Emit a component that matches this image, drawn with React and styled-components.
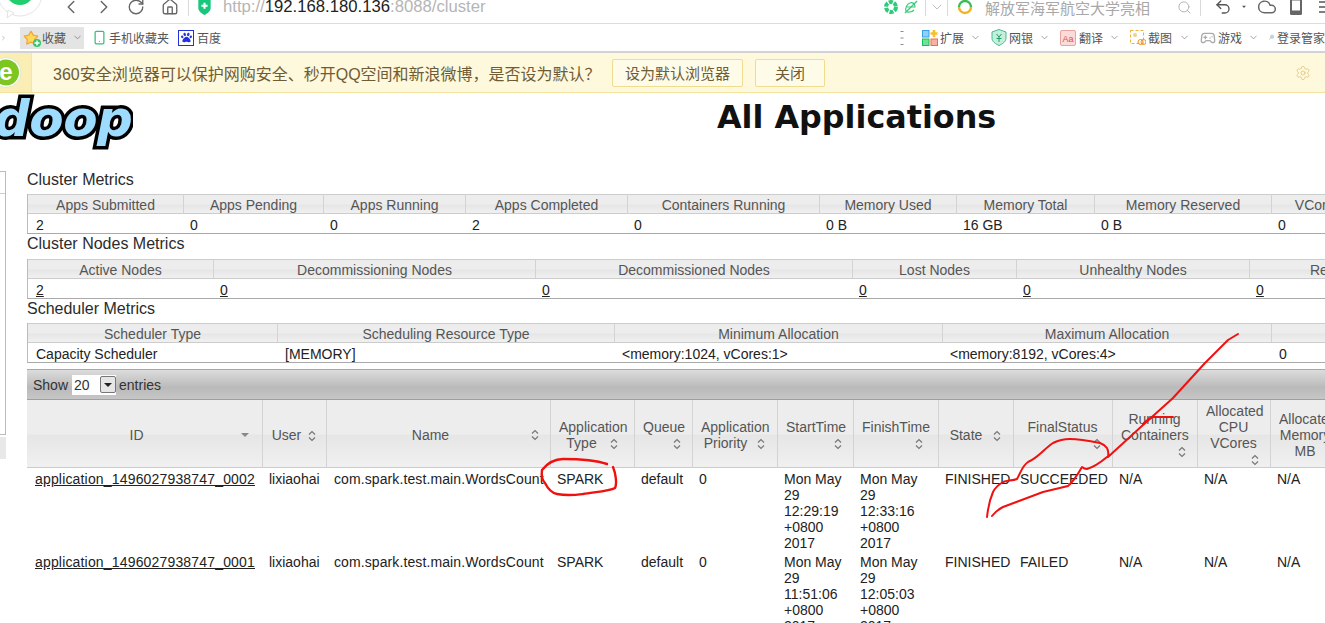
import React from 'react'
import styled, { createGlobalStyle } from 'styled-components'
import {
  ChevronLeft, ChevronRight, ChevronDown, RotateCw, House, Search, Undo2, Cloud, Settings,
  Smartphone, Star, Gamepad2,
} from 'lucide-react'
import { FaPaw } from 'react-icons/fa'

const GlobalStyle = createGlobalStyle`
  html, body {
    margin: 0;
    height: 100%;
    overflow: hidden;
    background: #fff;
  }
  body {
    font-family: "Liberation Sans", Arial, sans-serif;
    font-size: 14px;
    color: #222;
  }
  #root {
    width: 1325px;
    height: 623px;
    overflow: hidden;
    position: relative;
  }
`

const CJK = `"Liberation Sans", "Noto Sans CJK SC", sans-serif`

const Address = styled.div`
  height: 24px;
  box-sizing: border-box;
  border-bottom: 1px solid #dcdcdc;
  padding-bottom: 9px;
  display: flex;
  align-items: center;
  background: #fff;
`
const Slot = styled.div`
  width: ${p => p.$w}px;
  flex: none;
  display: flex;
  align-items: center;
  justify-content: ${p => p.$end ? 'flex-end' : 'center'};
  color: ${p => p.$c || '#666'};
`
const Sep = styled.div`
  width: 1px;
  height: 17px;
  flex: none;
  background: #d9d9d9;
`
const Url = styled.div`
  font-size: 16.7px;
  color: #b5b5b5;
  margin-left: 3px;
  white-space: nowrap;
  b {
    font-weight: normal;
    color: #222;
  }
`
const Spacer = styled.div`
  flex: 1;
`
const SearchHint = styled.div`
  width: 191px;
  flex: none;
  font-family: ${CJK};
  font-size: 15px;
  color: #a8a8a8;
  white-space: nowrap;
`
const Bookmarks = styled.div`
  height: 29px;
  box-sizing: border-box;
  border-bottom: 2px solid #d2d2d2;
  display: flex;
  align-items: center;
  background: #fff;
  font-family: ${CJK};
  font-size: 12px;
  color: #555;
`
const FavButton = styled.div`
  width: 64px;
  height: 22px;
  flex: none;
  margin: 0 8px 0 13px;
  background: #e4e4e4;
  display: flex;
  align-items: center;
  padding-left: 3px;
  box-sizing: border-box;
  gap: 3px;
`
const Mark = styled.div`
  display: flex;
  align-items: center;
  gap: ${p => p.$gap ?? 2}px;
  margin-right: ${p => p.$mr ?? 0}px;
  white-space: nowrap;
  flex: none;
`
const PawBox = styled.span`
  width: 14px;
  height: 14px;
  border: 1px solid #2233dd;
  color: #2233dd;
  display: inline-flex;
  align-items: center;
  justify-content: center;
`
const Tool = styled.div`
  display: flex;
  align-items: center;
  width: ${p => p.$w}px;
  flex: none;
  white-space: nowrap;
  overflow: hidden;
  gap: ${p => p.$gap ?? 2}px;
`
const Caret = styled(ChevronDown)`
  margin-left: auto;
  margin-right: 10px;
  color: #999;
`

const InfoBar = styled.div`
  height: 40px;
  box-sizing: border-box;
  background: #fef8dd;
  border-bottom: 1px solid #f3e29b;
  display: flex;
  align-items: center;
  font-family: ${CJK};
  font-size: 16px;
  color: #6e5c34;
`
const InfoIcon = styled.div`
  width: 31px;
  height: 100%;
  flex: none;
  background: #fbeeb5;
  border-right: 1px solid #f6e6a6;
`
const InfoText = styled.div`
  margin-left: 21px;
  width: 559px;
  flex: none;
  white-space: nowrap;
`
const InfoButton = styled.div`
  width: ${p => p.$w}px;
  height: 28px;
  box-sizing: border-box;
  flex: none;
  margin-left: ${p => p.$ml}px;
  border: 1px solid #f0dc8e;
  border-radius: 2px;
  background: #fffbe9;
  font-size: 15px;
  display: flex;
  align-items: center;
  justify-content: center;
`
const Gear = styled(Settings)`
  margin-left: auto;
  margin-right: 14px;
  color: #e0c47e;
`

const Header = styled.header`
  height: 77px;
  display: flex;
  overflow: hidden;
`
const Logo = styled.div`
  width: 133px;
  flex: none;
  overflow: hidden;
  font-family: "DejaVu Sans", sans-serif;
  font-weight: bold;
  font-style: italic;
  font-size: 50px;
  line-height: 52px;
  color: #9edcff;
  -webkit-text-stroke: 7px #000;
  paint-order: stroke fill;
  letter-spacing: -0.5px;
  white-space: nowrap;
  text-indent: -6px;
`
const PageTitle = styled.h1`
  margin: 5px 0 0 584px;
  font-family: "DejaVu Sans", sans-serif;
  font-size: 31.8px;
  line-height: 38px;
  color: #111;
  white-space: nowrap;
`
const Body = styled.div`
  display: flex;
`
const Nav = styled.nav`
  width: 27px;
  flex: none;
`
const NavBox = styled.div`
  width: 5px;
  height: 262px;
  border: 1px solid #bbb;
  border-left: 0;
  margin-top: 1px;
`
const NavHead = styled.div`
  height: 21px;
  border-bottom: 1px solid #ccc;
`
const NavFoot = styled.div`
  width: 6px;
  height: 22px;
  margin-top: 2px;
  background: #e8e8e8;
`
const Main = styled.main`
  width: 1500px;
  flex: none;
`
const SectionTitle = styled.div`
  font-size: 16px;
  line-height: 20px;
  color: #2b2b2b;
  margin-bottom: ${p => p.$mb ?? 4}px;
`
const MetricsTable = styled.table`
  border-collapse: separate;
  border-spacing: 0;
  table-layout: fixed;
  width: ${p => p.$width}px;
  border-left: 1px solid #bbb;
  border-bottom: 1px solid #aaa;
  box-sizing: border-box;
  th {
    height: 20px;
    box-sizing: border-box;
    padding: 3px 0 0;
    font-weight: normal;
    font-size: 14px;
    line-height: 15px;
    text-align: center;
    color: #555;
    border-top: 1px solid #ccc;
    border-bottom: 1px solid #ccc;
    border-right: 1px solid #d3d3d3;
    background: linear-gradient(#ededed 0, #ededed 50%, #e6e6e6 55%, #f0f0f0 100%);
    white-space: nowrap;
  }
  td {
    height: 19px;
    box-sizing: border-box;
    padding: 3px 0 0 ${p => p.$pad}px;
    font-size: 14px;
    line-height: 16px;
    color: #222;
    white-space: nowrap;
  }
  td:first-child {
    padding-left: 8px;
  }
`
const Under = styled.span`
  text-decoration: underline;
`
const ShowBar = styled.div`
  margin-top: 6px;
  height: 31px;
  box-sizing: border-box;
  border-top: 1px solid #a8a8a8;
  border-bottom: 1px solid #a0a0a0;
  background: linear-gradient(#dcdcdc, #bababa 60%, #c6c6c6);
  display: flex;
  align-items: center;
  padding-left: 6px;
  color: #333;
  font-size: 14px;
`
const PickBox = styled.div`
  width: 44px;
  height: 20px;
  box-sizing: border-box;
  margin: 0 3px 0 4px;
  background: #fff;
  display: flex;
  align-items: center;
  justify-content: space-between;
  padding-left: 2px;
`
const PickArrow = styled.div`
  width: 16px;
  height: 17px;
  box-sizing: border-box;
  border: 1px solid #777;
  border-radius: 2px;
  background: #e6e6e6;
  display: flex;
  align-items: center;
  justify-content: center;
  &::after {
    content: '';
    border: 4px solid transparent;
    border-top: 4px solid #222;
    border-bottom: 0;
  }
`
const AppsTable = styled.table`
  border-collapse: separate;
  border-spacing: 0;
  table-layout: fixed;
  width: ${p => p.$width}px;
`
const AppHead = styled.th`
  position: relative;
  height: 67px;
  padding: 3px ${p => p.$edge ? 24 : 9}px 0 8px;
  box-sizing: border-box;
  font-weight: normal;
  font-size: 14px;
  line-height: 16px;
  text-align: center;
  color: #555;
  border-bottom: 1px solid #ccc;
  border-right: 1px solid #d3d3d3;
  background: linear-gradient(#ededed 0, #ededed 50%, #e6e6e6 53%, #f0f0f0 100%);
`
const AppCell = styled.td`
  height: 83px;
  box-sizing: border-box;
  padding: 3px 6px 0 6px;
  vertical-align: top;
  font-size: 14px;
  line-height: 16px;
  color: #222;
  letter-spacing: ${p => p.$spread ?? 0}px;
  &:first-child {
    padding-left: 8px;
  }
  &:nth-child(3) {
    padding-left: 7px;
  }
`
const SortGlyph = styled.svg`
  width: 8px;
  height: 12px;
  margin-left: ${p => p.$gap ?? 6}px;
  vertical-align: -2px;
`
const EdgeSort = styled.span`
  position: absolute;
  right: ${p => p.$right}px;
  top: 50%;
  margin-top: -5px;
  line-height: 0;
`
const Scribble = styled.svg`
  position: absolute;
  left: 0;
  top: 0;
  width: 1325px;
  height: 623px;
  pointer-events: none;
`

const Sort = ({ gap }) => (
  <SortGlyph $gap={gap} viewBox="0 0 8 12">
    <path d="M1 4.5 L4 1.5 L7 4.5 M1 7.5 L4 10.5 L7 7.5" fill="none" stroke="#777" strokeWidth="1.2" />
  </SortGlyph>
)

const clusterCols = [156, 140, 142, 162, 192, 137, 138, 177, 130]
const clusterHead = ['Apps Submitted', 'Apps Pending', 'Apps Running', 'Apps Completed', 'Containers Running', 'Memory Used', 'Memory Total', 'Memory Reserved', 'VCores Used']
const clusterRow = ['2', '0', '0', '2', '0', '0 B', '16 GB', '0 B', '0']

const nodeCols = [186, 322, 317, 164, 233, 226]
const nodeHead = ['Active Nodes', 'Decommissioning Nodes', 'Decommissioned Nodes', 'Lost Nodes', 'Unhealthy Nodes', 'Rebooted Nodes']
const nodeRow = ['2', '0', '0', '0', '0', '0']

const schedCols = [250, 337, 328, 329, 400]
const schedHead = ['Scheduler Type', 'Scheduling Resource Type', 'Minimum Allocation', 'Maximum Allocation', 'Maximum Cluster Application Priority']
const schedRow = ['Capacity Scheduler', '[MEMORY]', '<memory:1024, vCores:1>', '<memory:8192, vCores:4>', '0']

const appCols = [236, 64, 224, 84, 58, 85, 76, 85, 75, 99, 85, 73, 70]
const appHead = [
  { lines: ['ID'], edge: 12, desc: true },
  { lines: ['User'], gap: 7 },
  { lines: ['Name'], edge: 11 },
  { lines: ['Application', 'Type'], gap: 13 },
  { lines: ['Queue', ''], gap: 28 },
  { lines: ['Application', 'Priority'], gap: 10 },
  { lines: ['StartTime', ''], gap: 46 },
  { lines: ['FinishTime', ''], gap: 46 },
  { lines: ['State'], gap: 11 },
  { lines: ['FinalStatus', ''], gap: 69 },
  { lines: ['Running', 'Containers', ''], gap: 55 },
  { lines: ['Allocated', 'CPU', 'VCores', ''], gap: 43 },
  { lines: ['Allocated', 'Memory', 'MB'] },
]
const apps = [
  ['application_1496027938747_0002', 'lixiaohai', 'com.spark.test.main.WordsCount', 'SPARK', 'default', '0', 'Mon May 29 12:29:19 +0800 2017', 'Mon May 29 12:33:16 +0800 2017', 'FINISHED', 'SUCCEEDED', 'N/A', 'N/A', 'N/A'],
  ['application_1496027938747_0001', 'lixiaohai', 'com.spark.test.main.WordsCount', 'SPARK', 'default', '0', 'Mon May 29 11:51:06 +0800 2017', 'Mon May 29 12:05:03 +0800 2017', 'FINISHED', 'FAILED', 'N/A', 'N/A', 'N/A'],
]
const spread = { 0: 0.17, 2: 0.1 }

const sum = list => list.reduce((a, b) => a + b, 0)

function Metrics({ cols, head, row, link, pad = 6 }) {
  return (
    <MetricsTable $width={sum(cols)} $pad={pad}>
      <colgroup>
        {cols.map((w, i) => <col key={i} style={{ width: w }} />)}
      </colgroup>
      <thead>
        <tr>{head.map(h => <th key={h}>{h}</th>)}</tr>
      </thead>
      <tbody>
        <tr>
          {row.map((v, i) => <td key={i}>{link ? <Under>{v}</Under> : v}</td>)}
        </tr>
      </tbody>
    </MetricsTable>
  )
}

function AppHeadCell({ cell }) {
  const last = cell.lines.length - 1
  return (
    <AppHead $edge={cell.edge != null}>
      {cell.lines.map((line, i) => (
        <React.Fragment key={i}>
          {line}
          {i === last && cell.gap != null && <Sort gap={cell.gap} />}
          {i < last && <br />}
        </React.Fragment>
      ))}
      {cell.edge != null && (
        <EdgeSort $right={cell.edge}>
          {cell.desc
            ? <svg width="10" height="12" viewBox="0 0 10 12"><path d="M1 4 H9 L5 8 Z" fill="#888" /></svg>
            : <Sort gap={0} />}
        </EdgeSort>
      )}
    </AppHead>
  )
}

function BrowserLogo() {
  return (
    <svg width="54" height="14" viewBox="0 0 54 14" style={{ overflow: 'visible', flex: 'none' }}>
      <circle cx="20" cy="-6" r="22" fill="#fff" stroke="#e4e4e4" />
      <path d="M7 18 L14 13 L8 10 Z" fill="#fff" stroke="#e4e4e4" />
      <circle cx="20" cy="-9" r="14" fill="#1fcf6d" />
    </svg>
  )
}

function ShieldBadge() {
  return (
    <svg width="13" height="15" viewBox="0 0 14 17">
      <path d="M0 0 H14 V9 C14 13 10 15 7 17 C4 15 0 13 0 9 Z" fill="#18c77c" />
      <path d="M7 3 V10 M3.5 6.5 H10.5" stroke="#fff" strokeWidth="2.4" />
    </svg>
  )
}

function Aperture() {
  return (
    <svg width="14" height="14" viewBox="0 0 14 14">
      <circle cx="7" cy="7" r="5" fill="none" stroke="#2ecb7b" strokeWidth="4" strokeDasharray="4 1.2" />
    </svg>
  )
}

function LeafE() {
  return (
    <svg width="14" height="14" viewBox="0 0 14 14" fill="none" stroke="#35cc79" strokeWidth="1.2">
      <path d="M3 7 H11 C11 3 8 2 6 3 C3 4 1 8 2 11 C4 13 8 12 10 10" />
      <path d="M1 13 L13 1" />
    </svg>
  )
}

function SearchLogo() {
  return (
    <svg width="16" height="16" viewBox="0 0 16 16" fill="none" strokeWidth="2.4">
      <path d="M2 8 A6 6 0 0 1 14 8" stroke="#3dbb5a" />
      <path d="M14 8 A6 6 0 0 1 2 8" stroke="#f5b21f" />
    </svg>
  )
}

function TinyCaret() {
  return (
    <svg width="6" height="4" viewBox="0 0 6 4"><path d="M0 0 H6 L3 3.5 Z" fill="#555" /></svg>
  )
}

function PhoneFill() {
  return (
    <svg width="12" height="16" viewBox="0 0 12 16">
      <rect x="0" y="0" width="12" height="16" rx="1.5" fill="#666" />
      <rect x="2" y="1.5" width="8" height="10" fill="#fff" />
    </svg>
  )
}

function MenuBars() {
  return (
    <svg width="6" height="14" viewBox="0 0 6 14">
      <path d="M0 2 H6 M0 7 H6 M0 12 H6" stroke="#555" strokeWidth="1.6" />
    </svg>
  )
}

function FavStar() {
  return (
    <span style={{ position: 'relative', display: 'inline-flex', flex: 'none' }}>
      <Star size={16} fill="#ffd95a" color="#f2a93b" />
      <svg width="8" height="8" viewBox="0 0 8 8" style={{ position: 'absolute', right: -2, bottom: -1 }}>
        <circle cx="4" cy="4" r="4" fill="#35c46a" />
        <path d="M4 1.5 V6.5 M1.5 4 H6.5" stroke="#fff" strokeWidth="1.4" />
      </svg>
    </span>
  )
}

function ExtIcon() {
  return (
    <svg width="16" height="16" viewBox="0 0 16 16">
      <rect x="0.5" y="0.5" width="6.5" height="6.5" fill="#8ed0fb" stroke="#3ba0e8" />
      <path d="M12 0 V7 M8.5 3.5 H15.5" stroke="#f6c02c" strokeWidth="2.6" />
      <rect x="0.5" y="9" width="6.5" height="6.5" fill="#6fe29a" stroke="#1bbf57" />
      <rect x="9" y="9" width="6.5" height="6.5" fill="#fbb0a0" stroke="#ef6c50" />
    </svg>
  )
}

function BankIcon() {
  return (
    <svg width="16" height="17" viewBox="0 0 16 17">
      <path d="M8 0.5 L15 3 V9 C15 13 11 15 8 16.5 C5 15 1 13 1 9 V3 Z" fill="#c3efdc" stroke="#49b98b" />
      <path d="M5.5 5 L8 8 L10.5 5 M8 8 V13 M5.5 9.5 H10.5" fill="none" stroke="#1f9c68" strokeWidth="1" />
    </svg>
  )
}

function TranslateIcon() {
  return (
    <svg width="16" height="16" viewBox="0 0 16 16">
      <rect x="0.5" y="0.5" width="15" height="15" rx="1.5" fill="#fbdad7" stroke="#e7a5a0" />
      <text x="8" y="11.5" fontSize="9" textAnchor="middle" fill="#d9534f" fontFamily="Liberation Sans">Aa</text>
    </svg>
  )
}

function CaptureIcon() {
  return (
    <svg width="16" height="16" viewBox="0 0 16 16">
      <rect x="0.5" y="0.5" width="13" height="13" fill="none" stroke="#f0b13c" strokeDasharray="3 2" />
      <circle cx="5" cy="5" r="2" fill="#f5cf8e" />
      <circle cx="10.5" cy="12" r="2.5" fill="none" stroke="#e89422" />
      <circle cx="13.5" cy="12" r="2.5" fill="none" stroke="#e89422" />
    </svg>
  )
}

function LoginIcon() {
  return (
    <svg width="16" height="17" viewBox="0 0 16 17">
      <circle cx="10" cy="6" r="5.5" fill="#b8dcf7" stroke="#6fa8d8" />
      <path d="M6 10 L1 15.5" stroke="#d8a24a" strokeWidth="2" />
    </svg>
  )
}

function GreenE() {
  return (
    <svg width="31" height="39" viewBox="0 0 31 39">
      <circle cx="6" cy="19.5" r="15" fill="#fff" stroke="#dfe8c8" />
      <circle cx="6" cy="19.5" r="13" fill="#7dc51f" />
      <text x="6" y="27" fontSize="24" fontWeight="bold" textAnchor="middle" fill="#fff" fontFamily="Liberation Sans">e</text>
    </svg>
  )
}

export default function App() {
  return (
    <>
      <GlobalStyle />
      <Address>
        <BrowserLogo />
        <Slot $w={34}><ChevronLeft size={22} strokeWidth={1.6} /></Slot>
        <Slot $w={32}><ChevronRight size={22} strokeWidth={1.6} /></Slot>
        <Slot $w={32}><RotateCw size={18} strokeWidth={1.8} /></Slot>
        <Slot $w={36}><House size={18} strokeWidth={1.8} /></Slot>
        <Sep />
        <Slot $w={31}><ShieldBadge /></Slot>
        <Url>http://<b>192.168.180.136</b>:8088/cluster</Url>
        <Spacer />
        <Slot $w={21}><Aperture /></Slot>
        <Slot $w={19}><LeafE /></Slot>
        <Slot $w={5} />
        <Sep />
        <Slot $w={21} $c="#bbb"><ChevronDown size={16} strokeWidth={1.4} /></Slot>
        <Sep />
        <Slot $w={34}><SearchLogo /></Slot>
        <Slot $w={3} />
        <SearchHint>解放军海军航空大学亮相</SearchHint>
        <Slot $w={16} $c="#aaa"><Search size={15} strokeWidth={1.4} /></Slot>
        <Slot $w={8} />
        <Sep />
        <Slot $w={3} />
        <Slot $w={38} $c="#555"><Undo2 size={18} strokeWidth={1.8} /></Slot>
        <Slot $w={4}><TinyCaret /></Slot>
        <Slot $w={42} $c="#666"><Cloud size={20} strokeWidth={1.8} /></Slot>
        <Slot $w={16}><PhoneFill /></Slot>
        <Slot $w={21} $end><MenuBars /></Slot>
      </Address>

      <Bookmarks>
        <Slot $w={7} $c="#777"><ChevronRight size={14} strokeWidth={1.5} /></Slot>
        <FavButton>
          <FavStar />
          <span>收藏</span>
          <ChevronDown size={11} color="#888" style={{ marginLeft: 3 }} />
        </FavButton>
        <Mark $mr={9} $gap={2}><Smartphone size={15} color="#3bbd78" />手机收藏夹</Mark>
        <Mark $gap={3}><PawBox><FaPaw size={11} /></PawBox>百度</Mark>
        <Spacer />
        <Slot $w={18} $c="#8c8c8c">
          <svg width="4" height="18" viewBox="0 0 4 18"><path d="M2 2 V3 M2 8.5 V9.5 M2 15 V16" stroke="#8c8c8c" strokeWidth="3" /></svg>
        </Slot>
        <Slot $w={11} />
        <Tool $w={69}><ExtIcon /><span>扩展</span><Caret size={11} /></Tool>
        <Tool $w={69}><BankIcon /><span>网银</span><Caret size={11} /></Tool>
        <Tool $w={70} $gap={3}><TranslateIcon /><span>翻译</span><Caret size={11} /></Tool>
        <Tool $w={70}><CaptureIcon /><span>截图</span><Caret size={11} /></Tool>
        <Tool $w={69}><Gamepad2 size={16} color="#aaa" /><span>游戏</span><Caret size={11} /></Tool>
        <Tool $w={56} $gap={3}><LoginIcon /><span>登录管家</span></Tool>
      </Bookmarks>

      <InfoBar>
        <InfoIcon><GreenE /></InfoIcon>
        <InfoText>360安全浏览器可以保护网购安全、秒开QQ空间和新浪微博，是否设为默认？</InfoText>
        <InfoButton $w={131} $ml={0}>设为默认浏览器</InfoButton>
        <InfoButton $w={70} $ml={12}>关闭</InfoButton>
        <Gear size={16} strokeWidth={1.2} />
      </InfoBar>

      <Header>
        <Logo>doop</Logo>
        <PageTitle>All Applications</PageTitle>
      </Header>

      <Body>
        <Nav>
          <NavBox><NavHead /></NavBox>
          <NavFoot />
        </Nav>
        <Main>
          <SectionTitle>Cluster Metrics</SectionTitle>
          <Metrics cols={clusterCols} head={clusterHead} row={clusterRow} />
          <SectionTitle $mb={5}>Cluster Nodes Metrics</SectionTitle>
          <Metrics cols={nodeCols} head={nodeHead} row={nodeRow} link />
          <SectionTitle>Scheduler Metrics</SectionTitle>
          <Metrics cols={schedCols} head={schedHead} row={schedRow} pad={7} />
          <ShowBar>
            Show
            <PickBox>20<PickArrow /></PickBox>
            entries
          </ShowBar>
          <AppsTable $width={sum(appCols)}>
            <colgroup>
              {appCols.map((w, i) => <col key={i} style={{ width: w }} />)}
            </colgroup>
            <thead>
              <tr>{appHead.map((c, i) => <AppHeadCell key={i} cell={c} />)}</tr>
            </thead>
            <tbody>
              {apps.map(row => (
                <tr key={row[0]}>
                  {row.map((v, i) => (
                    <AppCell key={i} $spread={spread[i]}>{i === 0 ? <Under>{v}</Under> : v}</AppCell>
                  ))}
                </tr>
              ))}
            </tbody>
          </AppsTable>
        </Main>
      </Body>

      <Scribble viewBox="0 0 1325 623" fill="none" stroke="#f01010" strokeWidth="2" strokeLinecap="round" strokeLinejoin="round">
        <path d="M607 464 C598 461 580 459 563 459 C552 459 546 465 542 470 C541 477 543 481 545 483 C548 489 552 493 557 494 C568 496 575 495 583 494 C595 492 610 491 615 488 C617 484 616 474 613 467" strokeWidth="2.4" />
        <path d="M1238 334 L1228 340 L1205 363 L1173 398 L1143 425 L1108 457 C1109 452 1108 450 1107 448 C1105 445 1103 444 1100 443 C1090 441 1078 439 1070 439 C1062 439 1057 441 1053 443 C1045 448 1038 458 1028 462 C1022 466 1020 474 1017 479 C1012 481 1007 480 1003 482 C998 485 995 488 993 492 C990 499 988 508 987 517" />
        <path d="M992 516 C996 511 999 509 1003 507 L1043 492 L1068 486 C1073 482 1078 474 1082 467 C1084 469 1085 469 1087 469 C1094 467 1101 462 1107 457" />
        <path d="M1143 424 C1147 420 1150 418 1153 417 L1173 417" />
      </Scribble>
    </>
  )
}
